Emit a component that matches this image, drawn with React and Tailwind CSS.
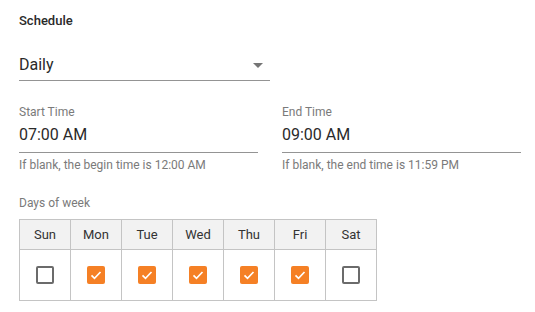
export default function App() {
  const days = [
    ["Sun", false],
    ["Mon", true],
    ["Tue", true],
    ["Wed", true],
    ["Thu", true],
    ["Fri", true],
    ["Sat", false],
  ];
  return (
    <div className="min-h-[312px] w-[535px] bg-white pl-[19px] pt-[11px] font-['Roboto',sans-serif]">
      <div className="text-[13px] font-medium leading-[20px] text-[#2a2a2a]">Schedule</div>

      <div className="relative mt-[24px] flex w-[251px] items-center border-b border-[#949494] pb-[6px]">
        <span className="text-[16px] leading-[19px] text-[#2a2a2a]">Daily</span>
        <svg className="absolute right-0 top-[-2px] h-6 w-6" viewBox="0 0 24 24">
          <path d="M7 10l5 5 5-5z" fill="#757575" />
        </svg>
      </div>

      <div className="mt-[23px] flex gap-[24px]">
        <Field label="Start Time" value="07:00 AM" helper="If blank, the begin time is 12:00 AM" />
        <Field label="End Time" value="09:00 AM" helper="If blank, the end time is 11:59 PM" />
      </div>

      <div className="mt-[22px] text-[12px] leading-[16px] text-[#7a7a7a]">Days of week</div>

      <div className="mt-[8px] inline-grid grid-cols-[repeat(7,51px)] border-l border-t border-[#c4c4c4]">
        {days.map(([d]) => (
          <div
            key={d}
            className="flex h-[30px] items-center justify-center border-b border-r border-[#c4c4c4] bg-[#f2f2f2] text-[13px] text-[#333333]"
          >
            {d}
          </div>
        ))}
        {days.map(([d, on]) => (
          <div key={d + "b"} className="flex h-[51px] items-center justify-center border-b border-r border-[#c4c4c4]">
            {on ? (
              <div className="flex h-[18px] w-[18px] items-center justify-center rounded-[2px] bg-[#f58025]">
                <svg viewBox="0 0 24 24" className="h-[18px] w-[18px]">
                  <path d="M6 12.5l4 4 8-8.5" fill="none" stroke="white" strokeWidth="2.2" />
                </svg>
              </div>
            ) : (
              <div className="h-[18px] w-[18px] rounded-[2px] border-2 border-[#6b6b6b]" />
            )}
          </div>
        ))}
      </div>
    </div>
  );
}

function Field({ label, value, helper }) {
  return (
    <div className="w-[239px]">
      <div className="text-[12px] leading-[16px] text-[#7a7a7a]">{label}</div>
      <div className="mt-[5px] border-b border-[#949494] pb-[8px] text-[16px] leading-[19px] text-[#2a2a2a]">{value}</div>
      <div className="mt-[4px] text-[12px] leading-[16px] text-[#7a7a7a]">{helper}</div>
    </div>
  );
}
